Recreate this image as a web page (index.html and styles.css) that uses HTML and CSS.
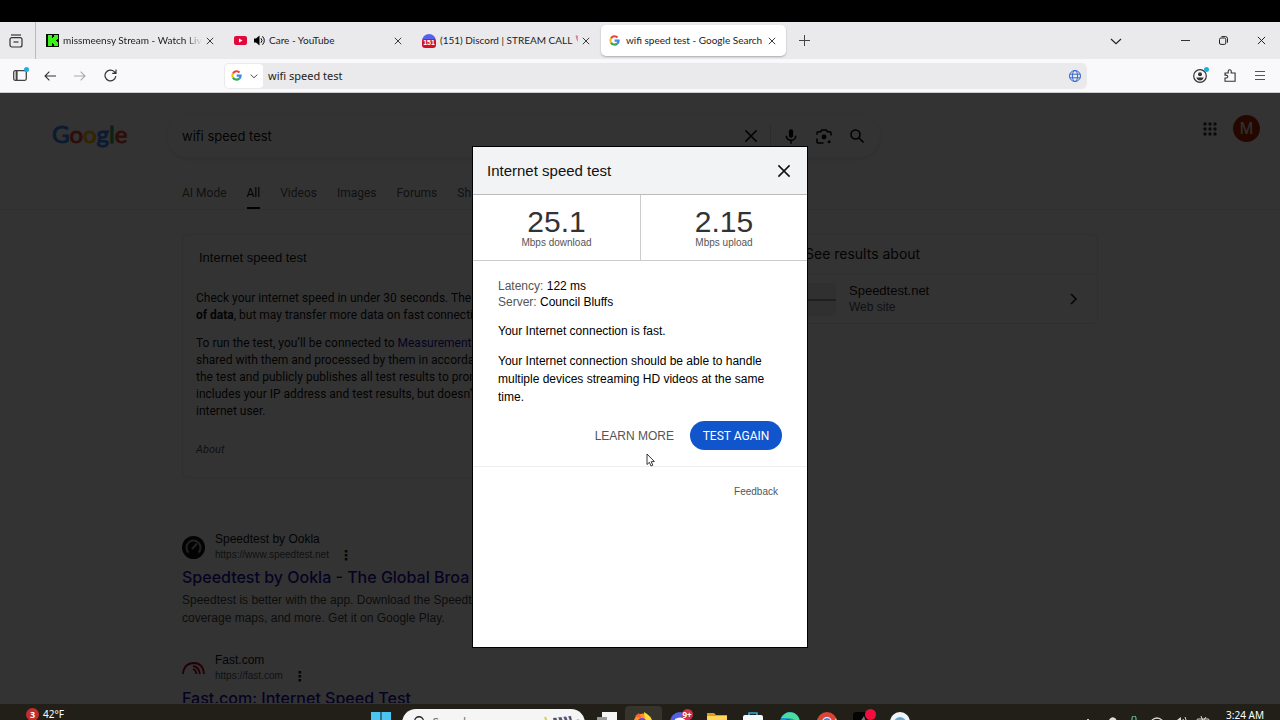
FILE: index.html
```html
<!DOCTYPE html>
<html lang="en">
<head>
<meta charset="utf-8">
<title>wifi speed test - Google Search</title>
<link rel="stylesheet" href="styles.css">
</head>
<body>
<svg class="defs" aria-hidden="true">
  <symbol id="g" viewBox="0 0 20 20"><g fill="none" stroke-width="3.8"><path stroke="#ea4335" d="M3.6 6.2A7.6 7.6 0 0 1 15.6 4.6"/><path stroke="#fbbc05" d="M3.6 13.8a7.6 7.6 0 0 1 0-7.6"/><path stroke="#34a853" d="M15 15.7A7.6 7.6 0 0 1 3.6 13.8"/><path stroke="#4285f4" d="M10.2 10.2h7.4a7.4 7.4 0 0 1-2.6 5.5"/></g></symbol>
  <symbol id="x" viewBox="0 0 10 10"><path d="M1 1l8 8M9 1L1 9" fill="none" stroke="currentColor" stroke-width="1.1"/></symbol>
  <symbol id="down" viewBox="0 0 12 12"><path d="M1 4l5 4.6L11 4" fill="none" stroke="currentColor" stroke-width="1.2"/></symbol>
</svg>
<div class="letterbox"></div>
<nav class="tabstrip" aria-label="Browser tabs">
  <button class="recent" aria-label="Recent tabs"><svg width="14" height="14" viewBox="0 0 14 14" fill="none" stroke="#333" stroke-width="1.2"><path d="M2 1h10"/><rect x="1" y="3.6" width="12" height="9.4" rx="2"/><path d="M4.5 8h5"/></svg></button>
  <div class="tab">
    <svg class="fav" viewBox="0 0 13 13"><path fill="#071007" d="M0 0h13v13H0z"/><path fill="#3cf01c" d="M2 1h4v3h1V3h1V1h4v4h-1v1h-1v1h1v1h1v4H8v-2H7V9H6v3H2z"/></svg>
    <span class="name fade">missmeensy Stream - Watch Liv</span>
    <button aria-label="Close tab"><svg width="8" height="8"><use href="#x"/></svg></button>
  </div>
  <div class="tab">
    <svg class="fav" viewBox="0 0 13 13"><rect y="2" width="13" height="9" rx="2" fill="#e0093a"/><path d="M5 4.5v4l3.5-2z" fill="#fff"/></svg>
    <svg class="sound" width="11" height="11" viewBox="0 0 11 11"><path d="M0 3.5h2L5.5.5v10L2 7.5H0z"/><path d="M7 3.3q2 2.2 0 4.4M8.5 1.3q3.6 4.2 0 8.4" fill="none" stroke="#000"/></svg>
    <span class="name">Care - YouTube</span>
    <button aria-label="Close tab"><svg width="8" height="8"><use href="#x"/></svg></button>
  </div>
  <div class="tab">
    <span class="discord">151</span>
    <span class="name">(151) Discord | STREAM CALL <svg width="7" height="9" viewBox="0 0 7 9"><path d="M1.5 1Q1.6 6.2 5.7 7.8" fill="none" stroke="#d98292" stroke-width="1.5"/><path d="M.8.8l2 .4v2M3.8 7l2.5-.3.2 1.7" fill="none" stroke="#d98292" stroke-width="1.2"/></svg></span>
    <button aria-label="Close tab"><svg width="8" height="8"><use href="#x"/></svg></button>
  </div>
  <div class="tab active">
    <svg class="fav g"><use href="#g"/></svg>
    <span class="name">wifi speed test - Google Search</span>
    <button aria-label="Close tab"><svg width="8" height="8"><use href="#x"/></svg></button>
  </div>
  <button class="plus" aria-label="New tab"><svg width="11" height="11" viewBox="0 0 11 11"><path d="M5.5 0v11M0 5.5h11" stroke="#444"/></svg></button>
  <div class="window">
    <button class="list" aria-label="List all tabs"><svg width="12" height="12"><use href="#down"/></svg></button>
    <button aria-label="Minimize"><svg width="9" height="9" viewBox="0 0 9 9"><path d="M0 4.5h9" stroke="#333"/></svg></button>
    <button aria-label="Restore"><svg width="9" height="9" viewBox="0 0 9 9" fill="none" stroke="#222"><rect x=".5" y="2" width="6.3" height="6.4" rx="1.4"/><path d="M2.5.6h4a2 2 0 0 1 2 2v4"/></svg></button>
    <button aria-label="Close window"><svg width="9" height="9"><use href="#x"/></svg></button>
  </div>
</nav>
<div class="toolbar">
  <div class="nav">
    <button class="dotted" aria-label="Sidebar"><svg width="14" height="11" viewBox="0 0 14 11" fill="none" stroke="#444" stroke-width="1.3"><rect x=".7" y=".7" width="12.6" height="9.6" rx="1.5"/><path d="M3.6 1v9" stroke-width="2"/></svg></button>
    <button aria-label="Back"><svg width="12" height="10" viewBox="0 0 12 10" fill="none" stroke="#333" stroke-width="1.1"><path d="M12 5H1M5.4.6L1 5l4.4 4.4"/></svg></button>
    <button aria-label="Forward"><svg width="12" height="10" viewBox="0 0 12 10" fill="none" stroke="#aaa" stroke-width="1.1"><path d="M0 5h11M6.6.6L11 5 6.6 9.4"/></svg></button>
    <button aria-label="Reload"><svg width="13" height="13" viewBox="0 0 13 13" fill="none" stroke="#333" stroke-width="1.2"><path d="M11.8 7A5.4 5.4 0 1 1 10.3 2.7L12 4.3M12 .5v3.8H8.2"/></svg></button>
  </div>
  <div class="address">
    <button class="engine" aria-label="Search engine"><svg width="11" height="11"><use href="#g"/></svg><svg width="8" height="8"><use href="#down"/></svg></button>
    <input type="text" value="wifi speed test" aria-label="Address">
    <svg class="globe" width="12" height="12" viewBox="0 0 12 12" fill="none" stroke="#3568cc"><circle cx="6" cy="6" r="5.5"/><ellipse cx="6" cy="6" rx="2.6" ry="5.5"/><path d="M.8 4.2h10.4M.8 7.8h10.4"/></svg>
  </div>
  <div class="tools">
    <button class="dotted" aria-label="Account"><svg width="14" height="14" viewBox="0 0 14 14"><circle cx="7" cy="7" r="6.3" fill="none" stroke="#333" stroke-width="1.2"/><circle cx="7" cy="5.2" r="2" fill="#333"/><path d="M3.3 8.5h7.4q-1 3-3.7 3t-3.7-3" fill="#333"/></svg></button>
    <button aria-label="Extensions"><svg width="12" height="13" viewBox="0 0 12 13"><path d="M1 12.3V9q2.8.3 2.8-1.4T1 6.2V4h3.2V2.2a1.5 1.5 0 0 1 3 0V4h3.9v8.3z" fill="none" stroke="#333" stroke-width="1.1"/></svg></button>
    <button aria-label="Menu"><svg width="10" height="9" viewBox="0 0 10 9"><path d="M0 .5h10M0 4.5h10M0 8.5h10" stroke="#555"/></svg></button>
  </div>
</div>

<main class="page">
  <header class="head">
    <a class="logo" href="#" aria-label="Google"><span class="b">G</span><span class="r">o</span><span class="y">o</span><span class="b">g</span><span class="n">l</span><span class="r">e</span></a>
    <form class="search">
      <input type="text" value="wifi speed test" aria-label="Search">
      <button type="button" aria-label="Clear"><svg width="14" height="14"><use href="#x"/></svg></button>
      <i></i>
      <button type="button" aria-label="Voice"><svg width="12" height="15" viewBox="0 0 14 17"><rect x="4.5" y="0" width="5" height="10" rx="2.5"/><path d="M1.5 7.5a5.5 5.5 0 0 0 11 0M7 13v4" fill="none" stroke="#000" stroke-width="1.8"/></svg></button>
      <button type="button" aria-label="Lens"><svg width="16" height="15" viewBox="0 0 17 16" fill="none" stroke="#000" stroke-width="1.6"><path d="M1 6V4.5Q1 3 2.5 3H5l1-2h5l1 2h2.5Q16 3 16 4.5V7M1 10v3q0 2 2 2h5"/><circle cx="8.5" cy="8.5" r="2.6" fill="#000" stroke="none"/><circle cx="14" cy="13.5" r="1.6" fill="#000" stroke="none"/></svg></button>
      <button type="button" aria-label="Search"><svg width="14" height="14" viewBox="0 0 14 14" fill="none" stroke="#000" stroke-width="1.6"><circle cx="5.5" cy="5.5" r="4.5"/><path d="M9 9l4.5 4.5"/></svg></button>
    </form>
    <div class="account">
      <button aria-label="Apps"><svg width="14" height="14" viewBox="0 0 14 14" fill="#333"><circle cx="2" cy="2" r="1.7"/><circle cx="7" cy="2" r="1.7"/><circle cx="12" cy="2" r="1.7"/><circle cx="2" cy="7" r="1.7"/><circle cx="7" cy="7" r="1.7"/><circle cx="12" cy="7" r="1.7"/><circle cx="2" cy="12" r="1.7"/><circle cx="7" cy="12" r="1.7"/><circle cx="12" cy="12" r="1.7"/></svg></button>
      <button class="avatar">M</button>
    </div>
  </header>
  <nav class="filters"><a href="#">AI Mode</a><a href="#" class="on">All</a><a href="#">Videos</a><a href="#">Images</a><a href="#">Forums</a><a href="#">Sh</a></nav>
  <div class="results">
    <div class="left">
      <section class="card">
        <h2>Internet speed test</h2>
        <div class="about">
          <p>Check your internet speed in under 30 seconds. The s<br><b>of data</b>, but may transfer more data on fast connectio</p>
          <p>To run the test, you’ll be connected to <a href="#">Measurement L</a><br>shared with them and processed by them in accordan<br>the test and publicly publishes all test results to promo<br>includes your IP address and test results, but doesn’t<br>internet user.</p>
          <em>About</em>
        </div>
      </section>
      <article class="hit">
        <div class="site">
          <svg width="23" height="23" viewBox="0 0 23 23"><circle cx="11.5" cy="11.5" r="11.5" fill="#111"/><path d="M6.5 16.5a7 7 0 1 1 10 0" fill="none" stroke="#aaa" stroke-width="2"/><path d="M10 13l5-5.5" stroke="#aaa" stroke-width="2"/></svg>
          <div><span>Speedtest by Ookla</span><cite>https://www.speedtest.net</cite></div><button class="more" aria-label="More">⋮</button>
        </div>
        <h3><a href="#">Speedtest by Ookla - The Global Broa</a></h3>
        <p>Speedtest is better with the app. Download the Speedte<br>coverage maps, and more. Get it on Google Play.</p>
      </article>
      <article class="hit">
        <div class="site">
          <svg width="23" height="23" viewBox="0 0 23 23" fill="none" stroke="#b3001c" stroke-width="1.8"><path d="M1 17Q2 6 12 6q9 0 10 11M11 9q6 1 7 8M11 12q3 1 3.5 5"/></svg>
          <div><span>Fast.com</span><cite>https://fast.com</cite></div><button class="more" aria-label="More">⋮</button>
        </div>
        <h3><a href="#">Fast.com: Internet Speed Test</a></h3>
      </article>
    </div>
    <aside class="side">
      <h2>See results about</h2>
      <a class="entity" href="#"><span class="thumb"></span><span class="label">Speedtest.net<small>Web site</small></span><svg width="7" height="12" viewBox="0 0 7 12"><path d="M1 1l5 5-5 5" fill="none" stroke="#222" stroke-width="1.6"/></svg></a>
    </aside>
  </div>

  <div class="shade">
    <section class="dialog" role="dialog" aria-labelledby="title">
      <header><h1 id="title">Internet speed test</h1><button aria-label="Close"><svg width="14" height="14"><use href="#x"/></svg></button></header>
      <div class="speeds"><div><strong>25.1</strong><span>Mbps download</span></div><div><strong>2.15</strong><span>Mbps upload</span></div></div>
      <div class="detail">
        <p class="facts"><span>Latency:</span> 122 ms<br><span>Server:</span> Council Bluffs</p>
        <p>Your Internet connection is fast.</p>
        <p>Your Internet connection should be able to handle multiple devices streaming HD videos at the same time.</p>
        <div class="actions"><button class="learn">LEARN MORE</button><button class="again">TEST AGAIN</button></div>
      </div>
      <footer><a href="#">Feedback</a></footer>
      <svg class="cursor" width="9" height="14" viewBox="0 0 9 14"><path d="M1 1v10.5l2.4-2.2 1.6 3.7 1.8-.8-1.6-3.5 3.2-.2z" fill="#fff" stroke="#222" stroke-width=".9"/></svg>
    </section>
  </div>
</main>

<footer class="taskbar">
  <div class="weather"><b>3</b>42°F</div>
  <div class="dock">
    <button class="start" aria-label="Start"><svg width="20" height="20" viewBox="0 0 20 20"><path d="M0 0h9.5v9.5H0zM10.5 0H20v9.5h-9.5zM0 10.5h9.5V20H0zM10.5 10.5H20V20h-9.5z" fill="#4cc4f0"/></svg></button>
    <label class="find"><svg width="13" height="13" viewBox="0 0 14 14" fill="none" stroke="#222" stroke-width="1.4"><circle cx="6.5" cy="5.5" r="4.7"/><path d="M3 9l-3 4"/></svg><input type="text" placeholder="Search"><svg width="38" height="20" viewBox="0 0 38 20"><path d="M2 1l2 5" stroke="#d9d13a" stroke-width="2"/><path d="M10 2l18-2 1 5-18 2z" fill="#556"/><path d="M14 1l2 5M19 0l2 5M24 0l2 5" stroke="#eef" stroke-width="2"/><path d="M11 7h18v10H11z" fill="#7d8bc4"/><circle cx="35" cy="5" r="2" fill="#c9d66a"/></svg></label>
    <div class="apps">
      <button aria-label="Task view"><svg viewBox="0 0 20 20"><path d="M5 0h15v14H5z" fill="#f4f4f4"/><path d="M0 5h10v12H0z" fill="#999"/></svg></button>
      <button class="current" aria-label="Firefox"><svg viewBox="0 0 20 20"><circle cx="10" cy="11" r="9.5" fill="#ff9126"/><path d="M11 0q9 5 8 13l-7-4z" fill="#ffdf3d"/><path d="M2 4l4-3 2 5z" fill="#ff5b36"/><circle cx="9" cy="11" r="5" fill="#7543dd"/></svg></button>
      <button class="badged" aria-label="Discord"><svg viewBox="0 0 20 20"><circle cx="10" cy="10" r="10" fill="#5460e5"/><path d="M5 7q5-3 10 0l1 7H4z" fill="#fff"/></svg><b>9+</b></button>
      <button aria-label="Files"><svg viewBox="0 0 20 20"><path d="M0 1h7l2 2h11v15H0z" fill="#d99b20"/><path d="M0 4h20v14H0z" fill="#ffd65a"/></svg></button>
      <button aria-label="Store"><svg viewBox="0 0 20 20"><path d="M6 4V1h8v3" fill="none" stroke="#37a9d8" stroke-width="1.6"/><rect y="3" width="20" height="16" rx="2" fill="#f4f9fb"/></svg></button>
      <button aria-label="Edge"><svg viewBox="0 0 20 20"><circle cx="10" cy="10" r="10" fill="#1595d4"/><path d="M1 6Q6-2 14 1q7 4 5 11-3-7-18-6z" fill="#4bdd9b"/><circle cx="8" cy="12" r="5" fill="#0c62b4"/></svg></button>
      <button aria-label="Chrome"><svg viewBox="0 0 20 20"><circle cx="10" cy="10" r="10" fill="#db4437"/><path d="M1 6l9 14A10 10 0 0 1 1 6" fill="#23a455"/><path d="M19 6l-9 14A10 10 0 0 0 19 6" fill="#fbc932"/><circle cx="10" cy="10" r="5" fill="#fff"/><circle cx="10" cy="10" r="4" fill="#4285f4"/></svg></button>
      <button class="badged red" aria-label="Recorder"><svg viewBox="0 0 20 20"><rect width="20" height="20" rx="3" fill="#050505"/><path d="M7 10l4-6 2 6z" fill="#777"/></svg><b></b></button>
      <button aria-label="Assistant"><svg viewBox="0 0 20 20"><circle cx="10" cy="10" r="10" fill="#edf5fa"/><circle cx="10" cy="11" r="6" fill="#63a6cf"/></svg></button>
    </div>
  </div>
  <div class="tray">
    <svg viewBox="0 0 14 14"><path d="M3 7l4-4 4 4" fill="none" stroke="#ccc"/></svg>
    <svg viewBox="0 0 14 14"><path d="M1 9q0-4 4-5 2-4 6-2 2 1 2 7z" fill="#ddd"/></svg>
    <svg viewBox="0 0 14 14"><rect x="5" y="0" width="4" height="9" rx="2" fill="none" stroke="#6fd2ae"/></svg>
    <svg viewBox="0 0 14 14" fill="none" stroke="#ddd" stroke-width="1.2"><path d="M1 5q6-6 12 0M3 8q4-4 8 0"/></svg>
    <svg viewBox="0 0 14 14"><path d="M1 4h3l4-3v10L4 8H1z" fill="#ddd"/><path d="M10 3q2 3 0 5M12 1q3 4 0 9" fill="none" stroke="#ddd"/></svg>
    <svg viewBox="0 0 14 14" fill="none" stroke="#ddd"><rect x="1" y="3" width="12" height="7" rx="1"/><path d="M5 0l2 5 3-4"/></svg>
    <time>3:24 AM</time>
  </div>
</footer>
</body>
</html>
```
FILE: styles.css
```css
* { box-sizing: border-box; }
body {
  margin: 0;
  height: 100vh;
  display: flex;
  flex-direction: column;
  overflow: hidden;
  background: #000;
  font: 12px/17px "Liberation Sans", Arial, sans-serif;
  color: #111;
}
button { border: 0; padding: 0; background: none; color: inherit; font: inherit; display: flex; align-items: center; justify-content: center; }
input { border: 0; padding: 0; background: none; outline: 0; color: inherit; font: inherit; min-width: 0; }
a { color: inherit; text-decoration: none; }
h1, h2, h3, p { margin: 0; font-weight: 400; }
svg { flex: none; display: block; }
.defs { position: absolute; width: 0; height: 0; }
.letterbox { height: 22px; flex: none; }

/* browser chrome */
.tabstrip, .toolbar { color: #222; flex: none; display: flex; align-items: center; }
.tabstrip { height: 37px; background: #eaeaed; font-family: Lato, sans-serif; font-size: 10px; }
.recent { width: 36px; height: 100%; padding-right: 3px; border-right: 1px solid #bbb; }
.tab { width: 188px; height: 31px; padding: 0 10px; display: flex; align-items: center; gap: 4px; }
.tab .name { flex: 1; min-width: 0; overflow: hidden; white-space: nowrap; }
.tab .name svg { display: inline; }
.tab .fade { mask-image: linear-gradient(90deg, #000 88%, transparent); }
.fav { width: 13px; height: 13px; }
.fav.g { width: 11px; height: 11px; }
.sound { margin-left: 3px; }
.discord { width: 14px; height: 14px; border-radius: 7px 7px 3px 3px; background: linear-gradient(#5662ec 5px, #d0102c 5px); color: #fff; font: bold 7px/18px "Liberation Sans", sans-serif; text-align: center; }
.tab.active { width: 185px; background: #fff; border-radius: 5px; box-shadow: 0 1px 2px #aaa; margin-left: 1px; padding: 0 10px 0 8px; gap: 6px; }
.plus { width: 36px; height: 31px; }
.window { margin-left: auto; display: flex; }
.window button { width: 38px; height: 31px; }
.window .list { margin-right: 31px; }
.toolbar { height: 34px; background: #f9f9fb; border-bottom: 1px solid #ccc; justify-content: space-between; font-family: "Noto Sans", sans-serif; font-size: 11px; }
.nav { display: flex; padding-left: 5px; flex: 0 0 224px; }
.nav button, .tools button { width: 30px; height: 30px; position: relative; }
.dotted::after { content: ""; position: absolute; top: 6px; right: 6px; width: 5px; height: 5px; border-radius: 50%; background: #20afd8; }
.address { flex: 1; height: 26px; border-radius: 5px; background: #eaeaed; display: flex; align-items: center; gap: 5px; padding: 1px 6px 1px 1px; }
.address input { flex: 1; }
.engine { width: 38px; height: 24px; gap: 8px; border-radius: 4px; background: #fff; }
.tools { flex: 0 0 193px; display: flex; justify-content: flex-end; padding-right: 5px; }

/* results page */
.page { flex: 1; min-height: 0; position: relative; overflow: hidden; background: #fff; }
.head { display: flex; align-items: center; height: 86px; padding: 0 20px 0 52px; }
.logo { width: 115px; padding-bottom: 4px; font: 24px/30px Lato, sans-serif; -webkit-text-stroke: 1px; }
.b { color: #4285f4; } .r { color: #ea4335; } .y { color: #fbbc05; } .n { color: #34a853; }
.search { flex: 0 1 713px; height: 44px; border-radius: 22px; box-shadow: 0 1px 4px #ddd; display: flex; align-items: center; padding: 0 7px 0 15px; }
.search input { flex: 1; font: 13px/20px Inter, sans-serif; }
.search button { width: 33px; height: 33px; }
.search i { width: 1px; height: 22px; margin: 0 3px; background: #ddd; }
.account { margin-left: auto; align-self: flex-start; padding-top: 22px; display: flex; align-items: center; gap: 16px; }
.avatar { width: 27px; height: 27px; border-radius: 50%; background: #b22a00; color: #fff; font-size: 16px; }
.filters { display: flex; gap: 20px; padding-left: 182px; height: 31px; border-bottom: 1px solid #f0f0f0; font: 12px/28px Roboto, sans-serif; color: #555; }
.filters .on { color: #000; border-bottom: 2px solid #000; }
.results { display: grid; grid-template-columns: 586px 308px; column-gap: 22px; padding: 24px 20px 0 182px; align-items: start; }
.left { white-space: nowrap; }
.card, .side { border: 1px solid #e8e8e8; border-radius: 5px; }
.card { height: 244px; margin-bottom: 53px; }
.card h2 { padding: 12px 16px; font: 13px/22px "Liberation Sans", sans-serif; }
.about { padding: 9px 13px; font-family: Roboto, sans-serif; }
.about p { margin-bottom: 11px; }
.about p a, h3 a { color: #1a0dab; }
.about em { display: block; padding-top: 10px; font-size: 11px; color: #555; }
.hit { margin-bottom: 25px; }
.site { display: flex; align-items: center; gap: 10px; height: 32px; }
.site span, .site cite { display: block; font-size: 12px; line-height: 16px; }
.site cite { font-size: 10px; font-style: normal; color: #555; }
.more { align-self: flex-end; font: bold 14px/16px "DejaVu Sans", sans-serif; }
.hit h3 { font: 500 16px/24px Inter, sans-serif; margin: 2px 0; }
.hit p { line-height: 18px; color: #444; }
.side h2 { padding: 8px 14px 9px; font: 14px/22px Inter, sans-serif; border-bottom: 1px solid #e8e8e8; }
.entity { display: flex; align-items: center; height: 48px; padding: 0 20px 0 11px; font-size: 13px; }
.thumb { width: 34px; height: 33px; margin-right: 13px; background: linear-gradient(transparent 16px, #999 16px, #999 18px, transparent 18px) #eee; }
.label { flex: 1; }
.label small { display: block; font-size: 12px; color: #555; }

/* modal */
.shade { position: absolute; inset: 0; padding-bottom: 2px; display: flex; align-items: center; justify-content: center; background: rgba(0, 0, 0, .8); }
.dialog { position: relative; width: 334px; min-height: 500px; background: #fff; box-shadow: 0 0 0 1px #000; }
.dialog header { display: flex; align-items: center; justify-content: space-between; height: 48px; padding: 0 16px 0 14px; background: #f1f3f4; border-bottom: 1px solid #bbb; }
.dialog h1 { font-size: 15px; line-height: 20px; }
.speeds { display: grid; grid-template-columns: 1fr 1fr; border-bottom: 1px solid #ccc; text-align: center; color: #333; }
.speeds div { height: 65px; padding-top: 12px; }
.speeds div + div { border-left: 1px solid #ccc; }
.speeds strong { display: block; font-size: 30px; line-height: 30px; font-weight: 400; }
.speeds span { display: block; font-size: 10px; line-height: 12px; color: #555; }
.detail { padding: 17px 25px 16px; border-bottom: 1px solid #eee; line-height: 18px; color: #000; }
.detail p { margin-bottom: 12px; }
.detail .facts { line-height: 16px; }
.facts span { color: #555; }
.actions { display: flex; justify-content: flex-end; gap: 16px; padding-top: 3px; color: #555; }
.again { width: 92px; height: 29px; border-radius: 15px; background: #1155cc; color: #fff; font-family: Roboto, sans-serif; }
.dialog footer { text-align: right; padding: 16px 29px; font-size: 10px; color: #555; }
.cursor { position: absolute; left: 173px; top: 306px; }

/* taskbar */
.taskbar { flex: none; height: 17px; overflow: hidden; display: grid; grid-template-columns: 1fr auto 1fr; align-items: start; background: #211f17; border-top: 1px solid #35342b; color: #fff; font: 10px/14px "Noto Sans", sans-serif; }
.weather { display: flex; align-items: center; gap: 4px; padding: 3px 0 0 26px; }
.weather b { width: 13px; height: 13px; border-radius: 50%; background: #c22f2b; font-size: 9px; line-height: 13px; text-align: center; }
.dock { display: flex; align-items: flex-start; }
.start { width: 39px; padding-top: 8px; }
.find { width: 183px; height: 28px; margin: 5px 4px 0 1px; padding: 7px 4px 0 11px; border-radius: 14px; background: #f5f5f5; display: flex; align-items: flex-start; gap: 7px; }
.find input { flex: 1; font-size: 12px; line-height: 14px; }
.apps { width: 330px; display: grid; grid-template-columns: repeat(9, 1fr); padding-top: 2px; }
.apps button { position: relative; height: 34px; padding-top: 6px; align-items: flex-start; border-radius: 4px; }
.apps svg { width: 20px; height: 20px; }
.current { background: #35342d; }
.badged b { position: absolute; top: 3px; right: 6px; width: 11px; height: 11px; border-radius: 50%; background: #c93545; color: #fff; font-size: 8px; line-height: 11px; }
.red b { background: #f00e3d; }
.tray { display: flex; justify-content: flex-end; align-items: flex-start; gap: 9px; padding: 9px 16px 0 0; }
.tray svg { width: 14px; height: 14px; margin-top: 3px; }
.tray time { padding-left: 7px; margin-top: -5px; }
```
